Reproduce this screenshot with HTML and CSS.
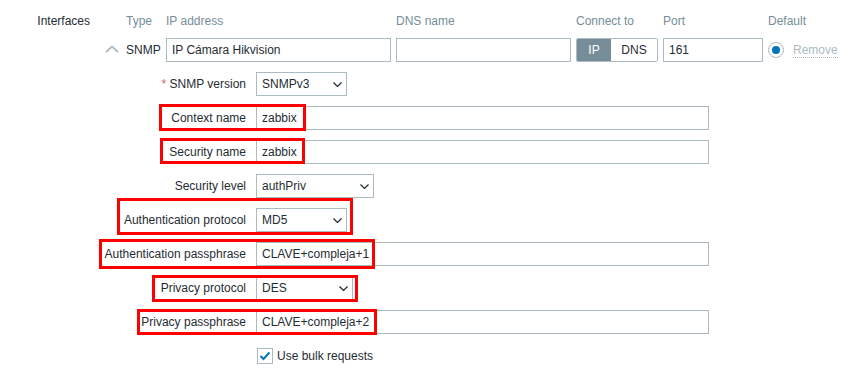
FILE: index.html
```html
<!DOCTYPE html>
<html>
<head>
	<title>Interfaces</title>
	<link rel="stylesheet" href="styles.css">
</head>
<body>
	<div class="page">
		<div class="field">
			<div class="field-label">Interfaces</div>
			<div class="ifaces">
				<div class="iface-grid">
					<span></span>
					<span class="th">Type</span>
					<span class="th">IP address</span>
					<span class="th">DNS name</span>
					<span class="th">Connect to</span>
					<span class="th">Port</span>
					<span class="th">Default</span>

					<span class="toggle">
						<svg width="14" height="8" viewBox="0 0 14 8"><path d="M1 7 L7 1.5 L13 7" fill="none" stroke="#b3bec4" stroke-width="2"/></svg>
					</span>
					<span class="type">SNMP</span>
					<input class="text w-ip" type="text" value="IP Cámara Hikvision">
					<input class="text w-dns" type="text" value="">
					<div class="seg">
						<span class="seg-on">IP</span>
						<span class="seg-off">DNS</span>
					</div>
					<input class="text w-port" type="text" value="161">
					<div class="default">
						<span class="radio"><span class="radio-dot"></span></span>
						<span class="remove">Remove</span>
					</div>
				</div>

				<div class="details">
					<span class="lbl"><span class="req">*</span> SNMP version</span>
					<div class="select w-90">SNMPv3
						<svg width="9" height="5" viewBox="0 0 9 5"><path d="M.5 .5 L4.5 4.5 L8.5 .5" fill="none" stroke="#1f2c33" stroke-width="1.2"/></svg>
					</div>

					<span class="lbl">Context name</span>
					<input class="text w-full" type="text" value="zabbix">

					<span class="lbl">Security name</span>
					<input class="text w-full" type="text" value="zabbix">

					<span class="lbl">Security level</span>
					<div class="select w-117">authPriv
						<svg width="9" height="5" viewBox="0 0 9 5"><path d="M.5 .5 L4.5 4.5 L8.5 .5" fill="none" stroke="#1f2c33" stroke-width="1.2"/></svg>
					</div>

					<span class="lbl">Authentication protocol</span>
					<div class="select w-90">MD5
						<svg width="9" height="5" viewBox="0 0 9 5"><path d="M.5 .5 L4.5 4.5 L8.5 .5" fill="none" stroke="#1f2c33" stroke-width="1.2"/></svg>
					</div>

					<span class="lbl">Authentication passphrase</span>
					<input class="text w-full" type="text" value="CLAVE+compleja+1">

					<span class="lbl">Privacy protocol</span>
					<div class="select w-97">DES
						<svg width="9" height="5" viewBox="0 0 9 5"><path d="M.5 .5 L4.5 4.5 L8.5 .5" fill="none" stroke="#1f2c33" stroke-width="1.2"/></svg>
					</div>

					<span class="lbl">Privacy passphrase</span>
					<input class="text w-full" type="text" value="CLAVE+compleja+2">

					<span></span>
					<label class="check">
						<span class="check-box">
							<svg width="14" height="14" viewBox="0 0 14 14"><path d="M2.5 7 L5.5 10 L11.5 3.5" fill="none" stroke="#0275b8" stroke-width="2"/></svg>
						</span>
						Use bulk requests
					</label>
				</div>
			</div>
		</div>

		<!-- red annotation boxes -->
		<div class="mark m-context"></div>
		<div class="mark m-secname"></div>
		<div class="mark m-authproto"></div>
		<div class="mark m-authpass"></div>
		<div class="mark m-privproto"></div>
		<div class="mark m-privpass"></div>
	</div>
</body>
</html>
```

FILE: styles.css
```css
body {
	margin: 0;
	background: #fff;
	color: #1f2c33;
	font: 12px Arial, "Liberation Sans", sans-serif;
}

.page {
	position: relative;
	padding-top: 14px;
}

.field {
	display: grid;
	grid-template-columns: 90px 1fr;
	column-gap: 12px;
}

.field-label {
	text-align: right;
	line-height: 14px;
}

.iface-grid {
	display: grid;
	grid-template-columns: 19px 35px 225px 175px 82px 100px auto;
	column-gap: 5px;
	row-gap: 10px;
	align-items: center;
}

.th {
	color: #768d99;
	line-height: 14px;
}

.toggle {
	display: flex;
	justify-content: center;
	height: 8px;
	margin-top: -2px;
}

.toggle svg {
	display: block;
}

.type {
	line-height: 14px;
}

.text {
	box-sizing: border-box;
	height: 24px;
	margin: 0;
	padding: 0 5px;
	border: 1px solid #acbbc2;
	border-radius: 0;
	background: #fff;
	color: #1f2c33;
	font: 12px Arial, "Liberation Sans", sans-serif;
	outline: none;
}

.w-ip { width: 225px; }
.w-dns { width: 175px; }
.w-port { width: 100px; }
.w-full { width: 453px; }

.seg {
	box-sizing: border-box;
	display: flex;
	height: 24px;
	border: 1px solid #acbbc2;
	border-radius: 2px;
	overflow: hidden;
}

.seg span {
	display: flex;
	align-items: center;
	justify-content: center;
}

.seg-on {
	width: 34px;
	background: #768d99;
	color: #fff;
}

.seg-off {
	flex: 1;
	background: #fff;
}

.default {
	display: flex;
	align-items: center;
}

.radio {
	box-sizing: border-box;
	display: flex;
	align-items: center;
	justify-content: center;
	width: 16px;
	height: 16px;
	border: 1px solid #acbbc2;
	border-radius: 50%;
	background: #fff;
}

.radio-dot {
	width: 8px;
	height: 8px;
	border-radius: 50%;
	background: #0275b8;
}

.remove {
	margin-left: 9px;
	color: #acbbc2;
	line-height: 14px;
	border-bottom: 1px dotted #acbbc2;
}

.details {
	display: grid;
	grid-template-columns: 144px 1fr;
	column-gap: 10px;
	row-gap: 10px;
	margin-top: 10px;
	align-items: center;
	justify-items: start;
}

.lbl {
	justify-self: end;
	line-height: 14px;
	white-space: nowrap;
}

.req {
	color: #e45959;
}

.select {
	box-sizing: border-box;
	display: flex;
	align-items: center;
	justify-content: space-between;
	height: 24px;
	padding: 0 4px 0 5px;
	border: 1px solid #acbbc2;
	background: #fff;
}

.select svg {
	display: block;
}

.w-90 { width: 91px; }
.w-97 { width: 97px; }
.w-117 { width: 118px; }

.check {
	display: flex;
	align-items: center;
	height: 24px;
	margin-left: 1px;
}

.check-box {
	box-sizing: border-box;
	display: flex;
	align-items: center;
	justify-content: center;
	width: 16px;
	height: 16px;
	margin-right: 4px;
	border: 1px solid #acbbc2;
	background: #fff;
}

.mark {
	position: absolute;
	box-sizing: border-box;
	border: 3px solid #f00;
}

.m-context { left: 159px; top: 104px; width: 147px; height: 27px; }
.m-secname { left: 160px; top: 138px; width: 145px; height: 26px; }
.m-authproto { left: 117px; top: 198px; width: 236px; height: 37px; }
.m-authpass { left: 99px; top: 239px; width: 276px; height: 30px; }
.m-privproto { left: 152px; top: 275px; width: 206px; height: 27px; }
.m-privpass { left: 137px; top: 309px; width: 240px; height: 26px; }
```
